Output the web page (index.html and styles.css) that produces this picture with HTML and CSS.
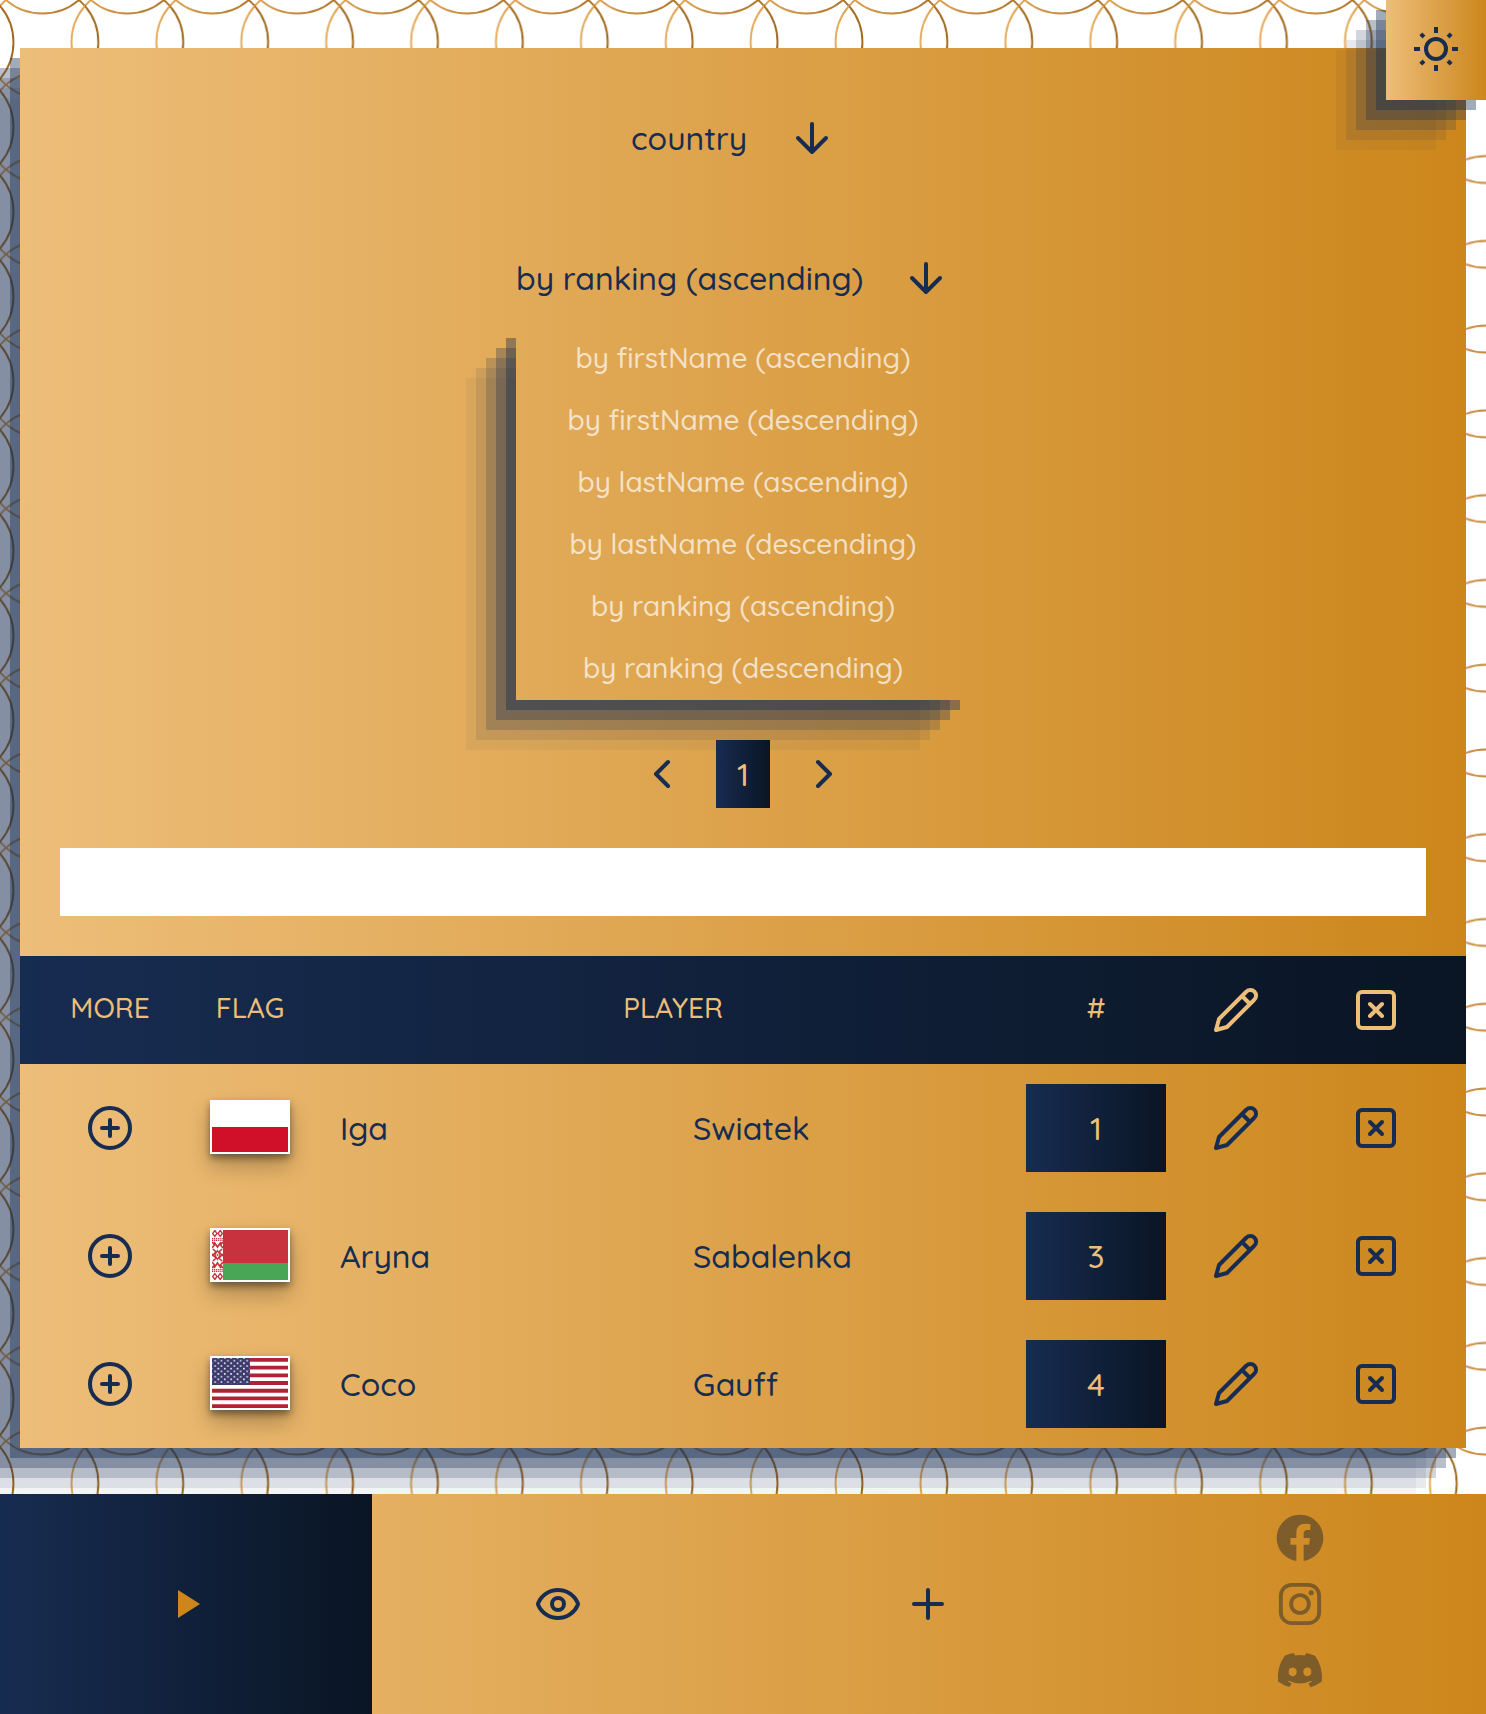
FILE: index.html
```
<!DOCTYPE html>
<html lang="en">
<head>
<meta charset="utf-8">
<title>Players</title>
<link rel="stylesheet" href="styles.css">
</head>
<body>
<svg class="backdrop" width="1486" height="1714" aria-hidden="true">
  <defs>
    <linearGradient id="ring" x1="0" y1="0" x2="1" y2="0">
      <stop offset="0" stop-color="#e5ac5c"/>
      <stop offset="1" stop-color="#9f681a"/>
    </linearGradient>
    <pattern id="rings" width="84.9" height="84.77" patternUnits="userSpaceOnUse">
      <g fill="none" stroke="url(#ring)" stroke-width="1.9">
        <circle cx="42.45" cy="42.38" r="55.9"/>
        <circle cx="-42.45" cy="42.38" r="55.9"/>
        <circle cx="127.35" cy="42.38" r="55.9"/>
        <circle cx="42.45" cy="-42.38" r="55.9"/>
        <circle cx="42.45" cy="127.15" r="55.9"/>
      </g>
    </pattern>
  </defs>
  <rect width="1486" height="1714" fill="url(#rings)"/>
</svg>

<svg class="sprite" aria-hidden="true">
  <symbol id="arrow-down" viewBox="0 0 24 24"><path d="M12 5v14M19 12l-7 7-7-7"/></symbol>
  <symbol id="chevron-left" viewBox="0 0 24 24"><path d="M15 18l-6-6 6-6"/></symbol>
  <symbol id="chevron-right" viewBox="0 0 24 24"><path d="M9 18l6-6-6-6"/></symbol>
  <symbol id="plus-circle" viewBox="0 0 24 24"><circle cx="12" cy="12" r="10"/><path d="M12 8v8M8 12h8"/></symbol>
  <symbol id="pencil" viewBox="0 0 24 24"><path d="M17 3a2.85 2.83 0 1 1 4 4L7.5 20.5 2 22l1.5-5.5ZM15 5l4 4"/></symbol>
  <symbol id="x-square" viewBox="0 0 24 24"><rect x="3" y="3" width="18" height="18" rx="2"/><path d="M9 9l6 6M15 9l-6 6"/></symbol>
</svg>

<button class="theme" aria-label="Theme">
  <svg class="icon icon-sun" viewBox="0 0 24 24"><circle cx="12" cy="12" r="5"/><path d="M12 1v3M12 20v3M1 12h3M20 12h3M4.4 4.4l1.6 1.6M18 18l1.6 1.6M4.4 19.6l1.6-1.6M18 6l1.6-1.6"/></svg>
</button>

<main class="panel">
  <section class="controls">
    <div class="select select-filter"><span class="select-label t-country">country</span><svg class="icon"><use href="#arrow-down"/></svg></div>
    <div class="select select-sort"><span class="select-label t-sort">by ranking (ascending)</span><svg class="icon"><use href="#arrow-down"/></svg></div>
    <ul class="options">
      <li>by firstName (ascending)</li>
      <li>by firstName (descending)</li>
      <li>by lastName (ascending)</li>
      <li>by lastName (descending)</li>
      <li>by ranking (ascending)</li>
      <li>by ranking (descending)</li>
    </ul>
    <nav class="pager">
      <svg class="icon"><use href="#chevron-left"/></svg>
      <span class="page">1</span>
      <svg class="icon"><use href="#chevron-right"/></svg>
    </nav>
    <input class="search" type="text" aria-label="Search">
  </section>

  <div class="row head">
    <span>MORE</span>
    <span>FLAG</span>
    <span class="player">PLAYER</span>
    <span>#</span>
    <svg class="icon"><use href="#pencil"/></svg>
    <svg class="icon"><use href="#x-square"/></svg>
  </div>

  <div class="row">
    <svg class="icon"><use href="#plus-circle"/></svg>
    <svg class="flag" viewBox="0 0 76 50" preserveAspectRatio="none"><path fill="#fff" d="M0 0h76v25H0z"/><path fill="#cf1028" d="M0 25h76v25H0z"/></svg>
    <span class="name">Iga</span><span class="name">Swiatek</span>
    <span class="rank">1</span>
    <svg class="icon"><use href="#pencil"/></svg>
    <svg class="icon"><use href="#x-square"/></svg>
  </div>

  <div class="row">
    <svg class="icon"><use href="#plus-circle"/></svg>
    <svg class="flag" viewBox="0 0 76 50" preserveAspectRatio="none">
      <defs>
        <g id="ornament" fill="none" stroke="#c8313e" stroke-width="1.3">
          <path d="M2.8 .5L5 3.5 2.8 6.5.6 3.5zM8.2 .5L10.4 3.5 8.2 6.5 6 3.5z"/>
          <path d="M0 8.6h11M0 10.4h11" stroke-dasharray="1.2 .7"/>
          <path d="M0 12l2.5 3L0 18M11 12l-2.5 3L11 18M2 12l3.5 5L9 12M1 19l3 3-4 4M10 19l-3 3 4 4" stroke-width="1.6"/>
        </g>
      </defs>
      <path fill="#fff" d="M0 0h11v50H0z"/>
      <use href="#ornament"/>
      <use href="#ornament" transform="matrix(1 0 0 -1 0 50)"/>
      <path d="M5.5 20.5l2.6 4.5-2.6 4.5L2.9 25z" fill="none" stroke="#c8313e" stroke-width="1.3"/>
      <circle cx="5.5" cy="25" r=".9" fill="#c8313e"/>
      <path fill="#c8313e" d="M11 0h65v33H11z"/><path fill="#4aa657" d="M11 33h65v17H11z"/>
    </svg>
    <span class="name">Aryna</span><span class="name">Sabalenka</span>
    <span class="rank">3</span>
    <svg class="icon"><use href="#pencil"/></svg>
    <svg class="icon"><use href="#x-square"/></svg>
  </div>

  <div class="row">
    <svg class="icon"><use href="#plus-circle"/></svg>
    <svg class="flag" viewBox="0 0 76 50" preserveAspectRatio="none">
      <defs>
        <pattern id="stars" width="6.4" height="5.35" patternUnits="userSpaceOnUse">
          <path fill="#fff" d="M2.3 1.9h1.6v1.4H2.3zM5.5 4.55h.9v1.4h-.9zM0 4.55h.7v1.4H0z M5.5 0h.9v.6h-.9zM0 0h.7v.6H0z"/>
        </pattern>
      </defs>
      <path fill="#fff" d="M0 0h76v50H0z"/>
      <path stroke="#b22234" stroke-width="3.85" d="M0 1.92h76M0 9.6h76M0 17.3h76M0 25h76M0 32.7h76M0 40.4h76M0 48.1h76"/>
      <path fill="#3c3b6e" d="M0 0h38v26.9H0z"/><path fill="url(#stars)" d="M0.5 0h37v26H0.5z"/>
    </svg>
    <span class="name">Coco</span><span class="name">Gauff</span>
    <span class="rank">4</span>
    <svg class="icon"><use href="#pencil"/></svg>
    <svg class="icon"><use href="#x-square"/></svg>
  </div>
</main>

<footer class="bar">
  <a class="tab active"><svg class="icon icon-play" viewBox="0 0 24 24"><path d="M8 5v14l11-7z"/></svg></a>
  <a class="tab"><svg class="icon" viewBox="0 0 24 24"><path d="M2.062 12.348a1 1 0 0 1 0-.696 10.75 10.75 0 0 1 19.876 0 1 1 0 0 1 0 .696 10.75 10.75 0 0 1-19.876 0"/><circle cx="12" cy="12" r="3"/></svg></a>
  <a class="tab"><svg class="icon" viewBox="0 0 24 24"><path d="M12 5v14M5 12h14"/></svg></a>
  <div class="tab social">
    <svg class="brand" viewBox="0 0 24 24"><path d="M12.001 2.002c-5.522 0-9.999 4.477-9.999 9.999 0 4.99 3.656 9.126 8.437 9.879v-6.988h-2.54v-2.891h2.54V9.798c0-2.508 1.493-3.891 3.776-3.891 1.094 0 2.24.195 2.24.195v2.459h-1.264c-1.24 0-1.628.772-1.628 1.563v1.875h2.771l-.443 2.891h-2.328v6.988C18.344 21.129 22 16.992 22 12.001c0-5.522-4.477-9.999-9.999-9.999z"/></svg>
    <svg class="brand" viewBox="0 0 24 24"><rect x="3.8" y="3.8" width="16.4" height="16.4" rx="4.6" fill="none" stroke="currentColor" stroke-width="1.65"/><circle cx="12" cy="12" r="3.8" fill="none" stroke="currentColor" stroke-width="1.65"/><circle cx="16.8" cy="7.2" r="1.1"/></svg>
    <svg class="brand" viewBox="0 0 24 24"><path transform="translate(.66 .67) scale(.945)" d="M14.82 4.26a10.14 10.14 0 0 0-.53 1.1 14.66 14.66 0 0 0-4.58 0 10.14 10.14 0 0 0-.53-1.1 16 16 0 0 0-4.13 1.3 17.33 17.33 0 0 0-3 11.59 16.6 16.6 0 0 0 5.07 2.59A12.89 12.89 0 0 0 8.23 18a9.65 9.65 0 0 1-1.71-.83 3.39 3.39 0 0 0 .42-.33 11.66 11.66 0 0 0 10.12 0q.21.18.42.33a10.84 10.84 0 0 1-1.71.84 12.41 12.41 0 0 0 1.08 1.78 16.44 16.44 0 0 0 5.06-2.59 17.22 17.22 0 0 0-3-11.59 16.09 16.09 0 0 0-4.09-1.35zM8.68 14.81a1.94 1.94 0 0 1-1.8-2 1.93 1.93 0 0 1 1.8-2 1.93 1.93 0 0 1 1.8 2 1.93 1.93 0 0 1-1.8 2zm6.64 0a1.94 1.94 0 0 1-1.8-2 1.93 1.93 0 0 1 1.8-2 1.92 1.92 0 0 1 1.8 2 1.92 1.92 0 0 1-1.8 2z"/></svg>
  </div>
</footer>
</body>
</html>
```
FILE: styles.css
```
:root {
  --navy: #172c51;
  --gold-light: #edbe7a;
  --gold: #cc861b;
  --gold-fill: linear-gradient(90deg, #edbe7a, #cc861b);
  --navy-fill: linear-gradient(90deg, #172c51, #0a1524);
  --steps: -10px 10px rgba(23, 44, 81, .4), -20px 20px rgba(23, 44, 81, .3),
    -30px 30px rgba(23, 44, 81, .2), -40px 40px rgba(23, 44, 81, .1),
    -50px 50px rgba(23, 44, 81, .05);
}
* { box-sizing: border-box; }
body {
  margin: 0;
  height: 1714px;
  display: flex;
  flex-direction: column;
  justify-content: space-between;
  overflow: hidden;
  background: #fff;
  color: var(--navy);
  font-family: Quicksand, Lato, sans-serif;
  font-size: 32px;
  font-weight: 500;
}
.backdrop { position: absolute; inset: 0; z-index: -1; }
.sprite { position: absolute; width: 0; height: 0; }
.icon {
  width: 48px;
  height: 48px;
  flex: none;
  fill: none;
  stroke: currentColor;
  stroke-width: 2;
  stroke-linecap: round;
  stroke-linejoin: round;
}
.theme {
  position: absolute;
  top: 0;
  right: 0;
  z-index: 2;
  width: 100px;
  height: 100px;
  padding: 0 0 2px;
  border: 0;
  display: flex;
  align-items: center;
  justify-content: center;
  color: var(--navy);
  background: var(--gold-fill);
  box-shadow: var(--steps);
}
.icon-sun { stroke-linecap: butt; }
.panel {
  margin: 48px 20px 0;
  height: 1400px;
  background: var(--gold-fill);
  box-shadow: var(--steps);
}
.controls {
  height: 908px;
  padding: 40px 40px;
  display: flex;
  flex-direction: column;
  align-items: center;
}
.select {
  height: 100px;
  display: flex;
  align-items: center;
}
.select-filter { width: 224px; gap: 42px; }
.select-sort { margin-top: 40px; width: 454px; gap: 40px; }
.select-label { line-height: 40px; white-space: nowrap; }
.t-country { width: 115px; }
.t-sort { width: 346px; }
.options {
  list-style: none;
  margin: 0;
  padding: 0;
  width: 454px;
  box-shadow: var(--steps);
  color: rgba(255, 255, 255, .7);
  font-size: 28px;
  text-align: center;
}
.options li { height: 62px; line-height: 59px; }
.pager {
  margin-top: 40px;
  display: flex;
  align-items: center;
  gap: 30px;
}
.page {
  width: 54px;
  height: 68px;
  line-height: 68px;
  text-align: center;
  color: var(--gold-light);
  background: var(--navy-fill);
}
.search {
  margin-top: 40px;
  width: 100%;
  height: 68px;
  border: 0;
  background: #fff;
}
.row {
  height: 128px;
  padding: 0 20px;
  display: grid;
  grid-template-columns: 140px 140px 1fr 1fr 140px 140px 140px;
  align-items: center;
  justify-items: center;
}
.head {
  height: 108px;
  color: var(--gold-light);
  background: var(--navy-fill);
  font-size: 28px;
}
.head span { padding-bottom: 5px; }
.player { grid-column: span 2; }
.flag {
  width: 80px;
  height: 54px;
  margin-bottom: 2px;
  border: 2px solid #fff;
  background: #fff;
  box-shadow: 0 4px 7px rgba(0, 0, 0, .4), 0 12px 22px rgba(0, 0, 0, .25);
}
.name {
  justify-self: start;
  padding-left: 20px;
}
.rank {
  width: 140px;
  height: 88px;
  line-height: 88px;
  text-align: center;
  color: var(--gold-light);
  background: var(--navy-fill);
}
.bar {
  height: 220px;
  display: grid;
  grid-template-columns: 372px 372px 368px 1fr;
  background: var(--gold-fill);
  position: relative;
}
.tab {
  display: flex;
  align-items: center;
  justify-content: center;
}
.active { color: var(--gold); background: var(--navy-fill); }
.icon-play { fill: currentColor; stroke: none; }
.social { flex-direction: column; gap: 10px; padding-left: 2px; opacity: .5; color: #2d2d2d; }
.brand { width: 56px; height: 56px; fill: currentColor; }
```
